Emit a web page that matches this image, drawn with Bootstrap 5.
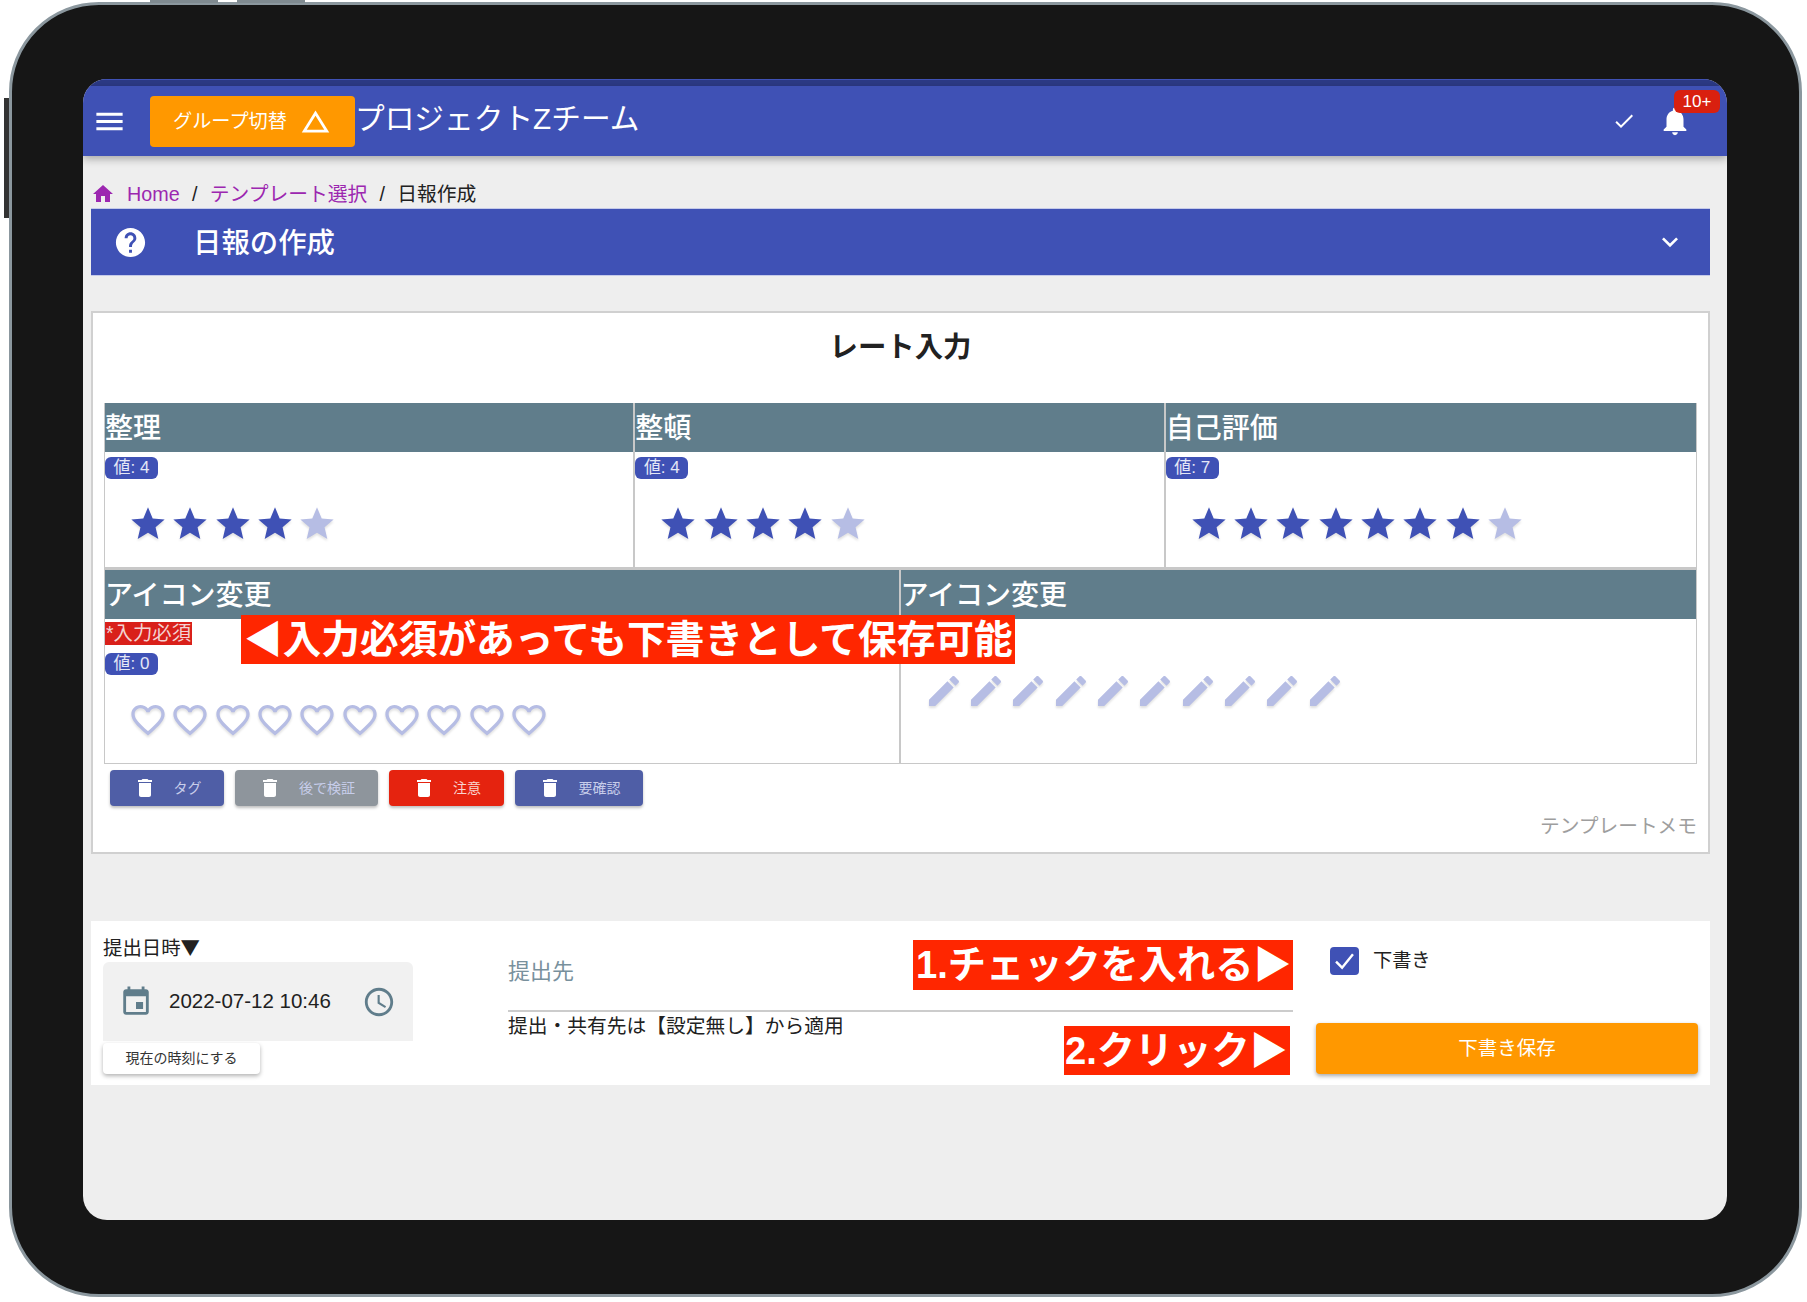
<!DOCTYPE html>
<html lang="ja">
<head>
  <meta charset="UTF-8">
  <meta name="viewport" content="width=device-width, initial-scale=1.0">
  <title>日報の作成</title>
  <link rel="stylesheet" href="https://cdn.jsdelivr.net/npm/bootstrap@5.3.0/dist/css/bootstrap.min.css">
<style>
body {
  background: #fff;
  font-family: "Liberation Sans", "Noto Sans CJK JP", sans-serif;
  font-size: 19.75px;
  color: #212121;
}
svg { fill: currentColor; flex: none; display: block; }

/* tablet frame */
.tablet-frame {
  position: relative;
  box-sizing: border-box;
  width: 1793px;
  height: 1295px;
  margin: 2px 0 0 9px;
  padding: 74px 72px 74px 71px;
  display: flex;
  background: #161616;
  border: 3px solid #8b979e;
  border-radius: 90px;
}
.side-key { position: absolute; background: #7f8a90; }
.side-key-a { left: 138px; top: -5px; width: 68px; height: 3px; }
.side-key-b { left: 225px; top: -5px; width: 68px; height: 3px; }
.side-key-c { left: -8px; top: 93px; width: 5px; height: 120px; background: #333; }
.tablet-screen {
  position: relative;
  flex: 1;
  background: #eee;
  border-radius: 24px;
  overflow: hidden;
}

/* header */
.top-strip { height: 7px; background: #2c3a86; border-top: 1px solid #3f51b5; }
.app-bar {
  height: 70px;
  padding: 0 35px 0 9px;
  background: #3f51b5;
  color: #fff;
  box-shadow: 0 3px 8px rgba(0,0,0,.3);
  flex-wrap: nowrap;
}
.group-btn {
  width: 205px;
  height: 51px;
  margin-left: 23px;
  padding: 2px 0 0 23px;
  background: #ff9800;
  border: 0;
  border-radius: 4px;
  color: #fff;
  font-size: 19.2px;
  gap: 12px;
}
.group-btn svg { margin-top: -2px; }
.team-name { margin: -3px 0 0 0; font-size: 29.7px; }
.bell-wrap { position: relative; margin-left: 22px; }
.bell-count {
  position: absolute;
  left: 16px;
  top: -14px;
  width: 46px;
  height: 23px;
  line-height: 23px;
  text-align: center;
  background: #d9200f;
  border-radius: 6px;
  font-size: 17px;
}

/* breadcrumb + accordion bar */
.crumbs { height: 52px; padding: 21px 0 0 8px; margin: 0; line-height: 34px; --bs-breadcrumb-divider-color: #212121; --bs-breadcrumb-item-padding-x: 12.3px; }
.crumbs a { color: #9c27b0; text-decoration: none; }
.crumbs .breadcrumb-item { line-height: 34px; }
.crumbs .breadcrumb-item + .breadcrumb-item::before { color: #212121; }
.crumbs .breadcrumb-item.active { color: #212121; }
.crumbs svg { color: #9c27b0; margin: 5px 12px 0 0; }
.page-area { padding: 0 17px 0 8px; }
.help-bar {
  height: 68px;
  padding: 0 24px 0 22px;
  background: #3f51b5;
  color: #fff;
  border: 1px solid #c5cae9;
  border-width: 1px 0;
}
.help-bar h1 { margin: 2px 0 0 45px; font-size: 28.4px; font-weight: 500; }

/* rate card */
.rate-card {
  margin-top: 35px;
  height: 543px;
  padding: 0 11px;
  border: 2px solid #d0d0d0;
  border-radius: 0;
  background: #fff;
}
.rate-title { height: 90px; padding-top: 13px; margin: 0; text-align: center; font-size: 28.4px; font-weight: 700; line-height: 42px; color: #212121; }
.rate-grid { border: 1px solid #c8c8c8; border-width: 0 1px 1px; }
.rate-cell { border-right: 2px solid #c8c8c8; }
.rate-cell:last-child { border-right: 0; }
.cell-head {
  height: 49px;
  padding-left: 0;
  background: #607d8b;
  color: #fff;
  font-size: 28px;
  font-weight: 500;
  line-height: 52px;
  white-space: nowrap;
}
.row-two { border-top: 3px solid #c8c8c8; }
.cell-body-one { height: 115px; padding-top: 5px; }
.cell-body-two { height: 144px; padding-top: 3px; }
.value-tag {
  display: block;
  width: 53px;
  height: 22px;
  padding: 0;
  background: #3f51b5;
  color: #e4e7f6;
  border-radius: 6px;
  font-size: 17px;
  font-weight: 400;
  line-height: 22px;
}
.required-tag { display: block; width: 87px; height: 23px; padding-left: 1px; background: #d9201a; color: #f3d3d3; font-size: 19.4px; line-height: 23px; white-space: nowrap; overflow: hidden; }
.rating { gap: 2.35px; padding-left: 23px; }
.rating-stars { margin-top: 25px; color: #3f51b5; }
.rating-hearts { margin-top: 25px; }
.rating-pens { margin-top: 49px; }
.rating svg { filter: drop-shadow(0 2px 1px rgba(0,0,0,.12)); }
.is-off { color: #b6bde4; }

.tag-row { padding: 6px 0 0 6px; gap: 11px; }
.tag-btn {
  height: 36px;
  padding: 0;
  border: 0;
  border-radius: 4px;
  font-size: 14px;
  color: #c7cdea;
  gap: 17px;
  box-shadow: 0 2px 3px rgba(0,0,0,.25);
  justify-content: center;
}
.tag-btn svg { color: #fff; }
.tag-blue { background: #4f5ea6; }
.tag-gray { background: #8e959c; }
.tag-red { background: #e5230f; color: #f9d5d0; }
.memo-link { margin: 7px 0 0; text-align: right; font-size: 19.7px; line-height: 26px; color: #9e9e9e; }

/* submit panel */
.submit-panel { margin-top: 67px; height: 164px; padding-left: 12px; background: #fff; }
.date-col { width: 310px; }
.date-label { padding-top: 14px; height: 41px; line-height: 24px; font-size: 19.4px; font-family: "Noto Sans CJK JP", sans-serif; }
.date-box {
  height: 79px;
  padding: 0 17px 0 16px;
  background: #f1f1f1;
  border-radius: 6px 6px 0 0;
  color: #607d8b;
}
.date-box span { margin-left: 16px; color: #212121; font-size: 20.5px; flex: 1; }
.now-btn {
  width: 157px;
  height: 31px;
  margin-top: 2px;
  padding: 0;
  background: #fff;
  border: 0;
  border-radius: 4px;
  font-size: 14px;
  color: #333;
  box-shadow: 0 2px 4px rgba(0,0,0,.3);
}
.dest-col { width: 785px; margin-left: 95px; }
.dest-name { height: 91px; padding-top: 36px; border-bottom: 2px solid #ccc; font-size: 22px; line-height: 30px; color: #78909c; }
.dest-note { line-height: 28px; }
.send-col { width: 382px; margin-left: 23px; }
.draft-check { height: 102px; padding: 26px 0 0 14px; margin: 0; gap: 14px; }
.draft-check .form-check-input {
  width: 29px;
  height: 28px;
  margin: 0;
  float: none;
  flex: none;
  border: 0;
  border-radius: 4px;
  background-color: #3f51b5;
  background-size: 100%;
  background-image: url("data:image/svg+xml,%3csvg xmlns='http://www.w3.org/2000/svg' viewBox='0 0 24 24'%3e%3cpath fill='none' stroke='%23fff' stroke-width='2' d='M5 12.5l5 5 9-11'/%3e%3c/svg%3e");
}
.draft-check label { font-size: 19.2px; line-height: 28px; }
.save-btn {
  width: 382px;
  height: 51px;
  background: #ff9800;
  border: 0;
  border-radius: 4px;
  color: #fff;
  font-size: 19.5px;
  box-shadow: 0 2px 4px rgba(0,0,0,.35);
}

/* red annotations over the page */
.note-ribbon {
  position: absolute;
  background: #ff2600;
  color: #fff;
  font-weight: 700;
  white-space: nowrap;
  overflow: hidden;
}
.note-keep { left: 158px; top: 536px; width: 774px; height: 49px; padding-left: 3px; font-size: 38.7px; line-height: 49px; }
.note-one { left: 830px; top: 861px; width: 380px; height: 50px; padding-left: 3px; font-size: 38.2px; line-height: 50px; }
.note-two { left: 981px; top: 947px; width: 226px; height: 49px; padding-left: 1px; font-size: 38.2px; line-height: 49px; }
</style>
</head>
<body>

<svg width="0" height="0" style="position:absolute">
  <symbol id="i-star" viewBox="0 0 24 24"><path d="M12 17.27L18.18 21l-1.64-7.03L22 9.24l-7.19-.61L12 2 9.19 8.63 2 9.24l5.46 4.73L5.82 21z"/></symbol>
  <symbol id="i-heart" viewBox="0 0 24 24"><path d="M16.5 3c-1.74 0-3.41.81-4.5 2.09C10.91 3.81 9.24 3 7.5 3 4.42 3 2 5.42 2 8.5c0 3.78 3.4 6.86 8.55 11.54L12 21.35l1.45-1.32C18.6 15.36 22 12.28 22 8.5 22 5.42 19.58 3 16.5 3zm-4.4 15.55l-.1.1-.1-.1C7.14 14.24 4 11.39 4 8.5 4 6.5 5.5 5 7.5 5c1.54 0 3.04.99 3.57 2.36h1.87C13.46 5.99 14.96 5 16.5 5c2 0 3.5 1.5 3.5 3.5 0 2.89-3.14 5.74-7.9 10.05z"/></symbol>
  <symbol id="i-pen" viewBox="0 0 24 24"><path d="M3 17.25V21h3.75L17.81 9.94l-3.75-3.75L3 17.25zM20.71 7.04c.39-.39.39-1.02 0-1.41l-2.34-2.34c-.39-.39-1.02-.39-1.41 0l-1.83 1.83 3.75 3.75 1.83-1.83z"/></symbol>
  <symbol id="i-trash" viewBox="0 0 24 24"><path d="M6 19c0 1.1.9 2 2 2h8c1.1 0 2-.9 2-2V7H6v12zM19 4h-3.5l-1-1h-5l-1 1H5v2h14V4z"/></symbol>
</svg>

<div class="tablet-frame">
  <i class="side-key side-key-a"></i>
  <i class="side-key side-key-b"></i>
  <i class="side-key side-key-c"></i>

  <div class="tablet-screen">
    <div class="top-strip"></div>

    <!-- Navbar -->
    <nav class="navbar app-bar d-flex align-items-center justify-content-start">
      <svg width="35" height="35" viewBox="0 0 24 24"><path d="M3 18h18v-2H3v2zm0-5h18v-2H3v2zm0-7v2h18V6H3z"/></svg>
      <button class="btn group-btn d-flex align-items-center" type="button">グループ切替
        <svg width="33" height="33" viewBox="0 0 24 24"><path d="M12 7.77L18.39 18H5.61L12 7.77M12 4L2 20h20L12 4z"/></svg>
      </button>
      <div class="team-name">プロジェクトZチーム</div>
      <svg class="ms-auto" width="24" height="24" viewBox="0 0 24 24"><path d="M9 16.2L4.8 12l-1.4 1.4L9 19 21 7l-1.4-1.4L9 16.2z"/></svg>
      <div class="bell-wrap">
        <svg width="34" height="34" viewBox="0 0 24 24"><path d="M12 22c1.1 0 2-.9 2-2h-4c0 1.1.89 2 2 2zm6-6v-5c0-3.07-1.64-5.64-4.5-6.32V4c0-.83-.67-1.5-1.5-1.5s-1.5.67-1.5 1.5v.68C7.63 5.36 6 7.92 6 11v5l-2 2v1h16v-1l-2-2z"/></svg>
        <span class="bell-count">10+</span>
      </div>
    </nav>

    <!-- Breadcrumb -->
    <ol class="breadcrumb crumbs">
      <li class="breadcrumb-item d-flex"><svg width="24" height="24" viewBox="0 0 24 24"><path d="M10 20v-6h4v6h5v-8h3L12 3 2 12h3v8z"/></svg><a href="#">Home</a></li>
      <li class="breadcrumb-item"><a href="#">テンプレート選択</a></li>
      <li class="breadcrumb-item active">日報作成</li>
    </ol>

    <div class="page-area">
      <div class="help-bar d-flex align-items-center">
        <svg width="35" height="35" viewBox="0 0 24 24"><path d="M12 2C6.48 2 2 6.48 2 12s4.48 10 10 10 10-4.48 10-10S17.52 2 12 2zm1 17h-2v-2h2v2zm2.07-7.75l-.9.92C13.45 12.9 13 13.5 13 15h-2v-.5c0-1.1.45-2.1 1.17-2.83l1.24-1.26c.37-.36.59-.86.59-1.41 0-1.1-.9-2-2-2s-2 .9-2 2H8c0-2.21 1.79-4 4-4s4 1.79 4 4c0 .88-.36 1.68-.93 2.25z"/></svg>
        <h1>日報の作成</h1>
        <svg class="ms-auto" width="32" height="32" viewBox="0 0 24 24"><path d="M16.59 8.59L12 13.17 7.41 8.59 6 10l6 6 6-6z"/></svg>
      </div>

      <!-- Rate input -->
      <div class="card rate-card">
        <h2 class="rate-title">レート入力</h2>

        <div class="rate-grid">
          <div class="row g-0">
            <div class="col-4 rate-cell">
              <div class="cell-head">整理</div>
              <div class="cell-body-one">
                <span class="badge value-tag">値: 4</span>
                <div class="rating rating-stars d-flex" data-on="4" data-count="5"></div>
              </div>
            </div>
            <div class="col-4 rate-cell">
              <div class="cell-head">整頓</div>
              <div class="cell-body-one">
                <span class="badge value-tag">値: 4</span>
                <div class="rating rating-stars d-flex" data-on="4" data-count="5"></div>
              </div>
            </div>
            <div class="col-4 rate-cell">
              <div class="cell-head">自己評価</div>
              <div class="cell-body-one">
                <span class="badge value-tag">値: 7</span>
                <div class="rating rating-stars d-flex" data-on="7" data-count="8"></div>
              </div>
            </div>
          </div>
          <div class="row g-0 row-two">
            <div class="col-6 rate-cell">
              <div class="cell-head">アイコン変更</div>
              <div class="cell-body-two">
                <span class="required-tag">*入力必須</span>
                <span class="badge value-tag mt-2">値: 0</span>
                <div class="rating rating-hearts is-off d-flex" data-icon="i-heart"></div>
              </div>
            </div>
            <div class="col-6 rate-cell">
              <div class="cell-head">アイコン変更</div>
              <div class="cell-body-two">
                <div class="rating rating-pens is-off d-flex" data-icon="i-pen"></div>
              </div>
            </div>
          </div>
        </div>

        <div class="tag-row d-flex">
          <button class="btn tag-btn tag-blue d-flex align-items-center" style="width:114px" type="button"><svg width="24" height="24"><use href="#i-trash"/></svg>タグ</button>
          <button class="btn tag-btn tag-gray d-flex align-items-center" style="width:143px" type="button"><svg width="24" height="24"><use href="#i-trash"/></svg>後で検証</button>
          <button class="btn tag-btn tag-red d-flex align-items-center" style="width:115px" type="button"><svg width="24" height="24"><use href="#i-trash"/></svg>注意</button>
          <button class="btn tag-btn tag-blue d-flex align-items-center" style="width:128px" type="button"><svg width="24" height="24"><use href="#i-trash"/></svg>要確認</button>
        </div>
        <p class="memo-link">テンプレートメモ</p>
      </div>

      <!-- Submit -->
      <div class="submit-panel d-flex">
        <div class="date-col">
          <div class="date-label">提出日時▼</div>
          <div class="date-box d-flex align-items-center">
            <svg width="34" height="34" viewBox="0 0 24 24"><path d="M17 12h-5v5h5v-5zM16 1v2H8V1H6v2H5c-1.11 0-1.99.9-1.99 2L3 19c0 1.1.89 2 2 2h14c1.1 0 2-.9 2-2V5c0-1.1-.9-2-2-2h-1V1h-2zm3 18H5V8h14v11z"/></svg>
            <span>2022-07-12 10:46</span>
            <svg width="34" height="34" viewBox="0 0 24 24"><path d="M11.99 2C6.47 2 2 6.48 2 12s4.47 10 9.99 10C17.52 22 22 17.52 22 12S17.52 2 11.99 2zM12 20c-4.42 0-8-3.58-8-8s3.58-8 8-8 8 3.58 8 8-3.58 8-8 8zm.5-13H11v6l5.25 3.15.75-1.23-4.5-2.67z"/></svg>
          </div>
          <button class="btn now-btn" type="button">現在の時刻にする</button>
        </div>
        <div class="dest-col">
          <div class="dest-name">提出先</div>
          <div class="dest-note">提出・共有先は【設定無し】から適用</div>
        </div>
        <div class="send-col">
          <div class="form-check draft-check d-flex">
            <input class="form-check-input" type="checkbox" id="draftCheck" checked>
            <label class="form-check-label" for="draftCheck">下書き</label>
          </div>
          <button class="btn save-btn" type="button">下書き保存</button>
        </div>
      </div>
    </div>

    <!-- annotations -->
    <div class="note-ribbon note-keep">◀入力必須があっても下書きとして保存可能</div>
    <div class="note-ribbon note-one">1.チェックを入れる▶</div>
    <div class="note-ribbon note-two">2.クリック▶</div>
  </div>
</div>

<script src="https://cdn.jsdelivr.net/npm/bootstrap@5.3.0/dist/js/bootstrap.bundle.min.js"></script>
<script>
// fill the rating rows
document.querySelectorAll(".rating").forEach((row) => {
  const icon = row.dataset.icon || "i-star";
  const count = Number(row.dataset.count || 10);
  const on = Number(row.dataset.on || 0);
  let html = "";
  for (let i = 0; i < count; i++) {
    html += `<svg width="40" height="40" class="${i < on ? "" : "is-off"}"><use href="#${icon}"/></svg>`;
  }
  row.innerHTML = html;
});
</script>
</body>
</html>
